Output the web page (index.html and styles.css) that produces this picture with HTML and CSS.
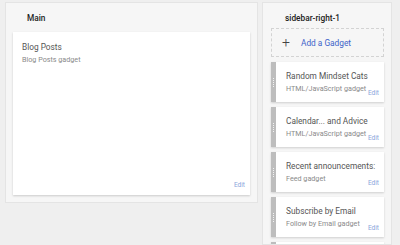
FILE: index.html
```html
<!DOCTYPE html>
<html>
<head>
<meta charset="utf-8">
<link rel="stylesheet" href="styles.css">
</head>
<body>
<div class="layout">
  <section class="panel main-panel">
    <h2 class="panel-title main-title">Main</h2>
    <div class="card main-card">
      <div class="card-title">Blog Posts</div>
      <div class="card-sub">Blog Posts gadget</div>
      <a class="edit main-edit">Edit</a>
    </div>
  </section>
  <section class="panel side-panel">
    <h2 class="panel-title side-title">sidebar-right-1</h2>
    <div class="add-gadget"><span class="plus">+</span><span class="add-text">Add a Gadget</span></div>
    <div class="gadget">
      <div class="handle"><span class="dots"></span></div>
      <div class="gcard">
        <div class="card-title">Random Mindset Cats</div>
        <div class="gline"><span class="card-sub">HTML/JavaScript gadget</span><a class="edit">Edit</a></div>
      </div>
    </div>
    <div class="gadget">
      <div class="handle"><span class="dots"></span></div>
      <div class="gcard">
        <div class="card-title">Calendar... and Advice</div>
        <div class="gline"><span class="card-sub">HTML/JavaScript gadget</span><a class="edit">Edit</a></div>
      </div>
    </div>
    <div class="gadget">
      <div class="handle"><span class="dots"></span></div>
      <div class="gcard">
        <div class="card-title">Recent announcements:</div>
        <div class="gline"><span class="card-sub">Feed gadget</span><a class="edit">Edit</a></div>
      </div>
    </div>
    <div class="gadget">
      <div class="handle"><span class="dots"></span></div>
      <div class="gcard">
        <div class="card-title">Subscribe by Email</div>
        <div class="gline"><span class="card-sub">Follow by Email gadget</span><a class="edit">Edit</a></div>
      </div>
    </div>
    <div class="gadget">
      <div class="handle"><span class="dots"></span></div>
      <div class="gcard"></div>
    </div>
  </section>
</div>
</body>
</html>
```
FILE: styles.css
```css
html, body {
  margin: 0;
  padding: 0;
  background: #efefef;
  font-family: Roboto, "Noto Sans", Arial, sans-serif;
  overflow: hidden;
  height: 245px;
}
.layout {
  display: flex;
  align-items: flex-start;
  padding: 2px 0 0 5px;
  gap: 4px;
}
.panel {
  background: #f6f6f6;
  border: 1px solid #e4e4e4;
  box-sizing: border-box;
}
.main-panel {
  width: 253px;
  height: 201px;
  padding: 0 7px 7px 7px;
  display: flex;
  flex-direction: column;
}
.panel-title {
  margin: 0;
  font-size: 8.3px;
  font-weight: 500;
  color: #222;
  height: 29px;
  line-height: 31px;
}
.main-title {
  padding-left: 14px;
}
.side-title {
  padding-left: 14px;
  height: 25px;
  line-height: 31px;
}
.card {
  background: #fff;
  box-shadow: 0 1px 2px rgba(0,0,0,0.18);
  position: relative;
}
.main-card {
  flex: 1;
  padding: 9px 9px;
}
.card-title {
  font-size: 8.3px;
  color: #555;
  line-height: 12px;
}
.card-sub {
  font-size: 7.2px;
  color: #8a8a8a;
  line-height: 10px;
}
.main-card .card-sub {
  margin-top: 2px;
  display: block;
}
.edit {
  font-size: 6.5px;
  color: #8aa5db;
}
.main-edit {
  position: absolute;
  right: 5px;
  bottom: 6px;
}
.side-panel {
  width: 130px;
  height: 243px;
  overflow: hidden;
  padding: 0 7px 0 8px;
}
.add-gadget {
  border: 1px dashed #d3d3d3;
  height: 29px;
  box-sizing: border-box;
  display: flex;
  align-items: center;
  margin-bottom: 5px;
}
.plus {
  font-size: 14px;
  font-weight: 300;
  color: #444;
  margin-left: 10px;
  width: 19px;
  line-height: 14px;
  margin-top: -1px;
}
.add-text {
  font-size: 8.3px;
  color: #3d63c9;
}
.gadget {
  display: flex;
  height: 40px;
  flex-shrink: 0;
  margin-bottom: 5px;
  box-shadow: 0 1px 2px rgba(0,0,0,0.16);
}
.handle {
  width: 5px;
  flex-shrink: 0;
  background: #bdbdbd;
  display: flex;
  align-items: center;
  justify-content: center;
}
.dots {
  width: 1px;
  height: 9px;
  background: repeating-linear-gradient(to bottom, #f3f3f3 0 1px, transparent 1px 2px);
}
.gcard {
  flex: 1;
  min-width: 0;
  background: #fff;
  padding: 8px 5px 0 10px;
}
.gcard .card-title {
  line-height: 12px;
  white-space: nowrap;
}
.gline {
  display: flex;
  justify-content: space-between;
  align-items: flex-end;
  margin-top: 2px;
}
.gline .edit {
  margin-bottom: -3px;
}
```
